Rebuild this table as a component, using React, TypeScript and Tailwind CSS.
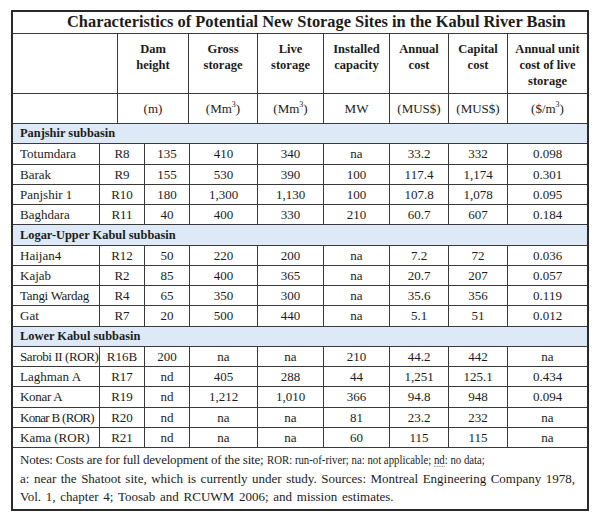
type Site = {
  name: string;
  code: string;
  dam: string;
  gross: string;
  live: string;
  mw: string;
  annual: string;
  capital: string;
  unit: string;
  tight?: string;
};

const sections: { label: string; rows: Site[] }[] = [
  {
    label: "Panjshir subbasin",
    rows: [
      { name: "Totumdara", code: "R8", dam: "135", gross: "410", live: "340", mw: "na", annual: "33.2", capital: "332", unit: "0.098" },
      { name: "Barak", code: "R9", dam: "155", gross: "530", live: "390", mw: "100", annual: "117.4", capital: "1,174", unit: "0.301" },
      { name: "Panjshir 1", code: "R10", dam: "180", gross: "1,300", live: "1,130", mw: "100", annual: "107.8", capital: "1,078", unit: "0.095" },
      { name: "Baghdara", code: "R11", dam: "40", gross: "400", live: "330", mw: "210", annual: "60.7", capital: "607", unit: "0.184" },
    ],
  },
  {
    label: "Logar-Upper Kabul subbasin",
    rows: [
      { name: "Haijan4", code: "R12", dam: "50", gross: "220", live: "200", mw: "na", annual: "7.2", capital: "72", unit: "0.036" },
      { name: "Kajab", code: "R2", dam: "85", gross: "400", live: "365", mw: "na", annual: "20.7", capital: "207", unit: "0.057" },
      { name: "Tangi Wardag", code: "R4", dam: "65", gross: "350", live: "300", mw: "na", annual: "35.6", capital: "356", unit: "0.119", tight: "tracking-[-0.3px]" },
      { name: "Gat", code: "R7", dam: "20", gross: "500", live: "440", mw: "na", annual: "5.1", capital: "51", unit: "0.012" },
    ],
  },
  {
    label: "Lower Kabul subbasin",
    rows: [
      { name: "Sarobi II (ROR)", code: "R16B", dam: "200", gross: "na", live: "na", mw: "210", annual: "44.2", capital: "442", unit: "na", tight: "tracking-[-0.4px]" },
      { name: "Laghman A", code: "R17", dam: "nd", gross: "405", live: "288", mw: "44", annual: "1,251", capital: "125.1", unit: "0.434" },
      { name: "Konar A", code: "R19", dam: "nd", gross: "1,212", live: "1,010", mw: "366", annual: "94.8", capital: "948", unit: "0.094", tight: "tracking-[-0.3px]" },
      { name: "Konar B (ROR)", code: "R20", dam: "nd", gross: "na", live: "na", mw: "81", annual: "23.2", capital: "232", unit: "na", tight: "tracking-[-0.7px]" },
      { name: "Kama (ROR)", code: "R21", dam: "nd", gross: "na", live: "na", mw: "60", annual: "115", capital: "115", unit: "na" },
    ],
  },
];

// header and data rows don't share column edges in the source table
const headGrid = "grid grid-cols-[104px_71px_69px_66px_66px_59px_59px_80px]";
const dataGrid = "grid grid-cols-[86px_45px_45px_68px_66px_66px_59px_59px_80px]";
const line = "border-[#3a3a3a]";

function HeadCell({ children }: { children?: React.ReactNode }) {
  return (
    <div className={`border-l ${line} first:border-l-0 pt-[7px] text-center font-bold text-[12.5px] leading-[16px]`}>
      {children}
    </div>
  );
}

function UnitCell({ children }: { children?: React.ReactNode }) {
  return (
    <div className={`border-l ${line} first:border-l-0 flex items-center justify-center text-[13px]`}>
      {children}
    </div>
  );
}

function DataRow({ site }: { site: Site }) {
  const values = [site.code, site.dam, site.gross, site.live, site.mw, site.annual, site.capital, site.unit];
  return (
    <div className={`${dataGrid} h-[20.25px] border-b ${line} text-[13px] leading-none`}>
      <div className={`flex items-center pl-[7px] whitespace-nowrap ${site.tight ?? ""}`}>{site.name}</div>
      {values.map((v, i) => (
        <div key={i} className={`border-l ${line} flex items-center justify-center`}>
          {v}
        </div>
      ))}
    </div>
  );
}

export default function App() {
  return (
    <div className="w-[600px] h-[522px] bg-white pt-[10px] pl-[11px] text-[#1c1c1c] font-[family-name:'Liberation_Serif','Times_New_Roman',serif]">
      <div className="w-[578px] border-2 border-[#2a2a2a]">
        <div className={`h-[22px] border-b ${line} flex items-center pl-[54px] font-bold text-[16.4px] leading-none whitespace-nowrap`}>
          Characteristics of Potential New Storage Sites in the Kabul River Basin
        </div>

        <div className={`${headGrid} h-[60px] border-b ${line}`}>
          <HeadCell />
          <HeadCell>Dam<br />height</HeadCell>
          <HeadCell>Gross<br />storage</HeadCell>
          <HeadCell>Live<br />storage</HeadCell>
          <HeadCell>Installed<br />capacity</HeadCell>
          <HeadCell>Annual<br />cost</HeadCell>
          <HeadCell>Capital<br />cost</HeadCell>
          <HeadCell>Annual unit<br />cost of live<br />storage</HeadCell>
        </div>

        <div className={`${headGrid} h-[30px] border-b ${line}`}>
          <UnitCell />
          <UnitCell>(m)</UnitCell>
          <UnitCell>(Mm<sup className="text-[8px] -top-[4px]">3</sup>)</UnitCell>
          <UnitCell>(Mm<sup className="text-[8px] -top-[4px]">3</sup>)</UnitCell>
          <UnitCell>MW</UnitCell>
          <UnitCell>(MUS$)</UnitCell>
          <UnitCell>(MUS$)</UnitCell>
          <UnitCell>($/m<sup className="text-[8px] -top-[4px]">3</sup>)</UnitCell>
        </div>

        {sections.map((s) => (
          <div key={s.label}>
            <div className={`h-[20.25px] border-b ${line} bg-[#dde9f6] flex items-center pl-[7px] font-bold text-[12.4px] leading-none`}>
              {s.label}
            </div>
            {s.rows.map((r) => (
              <DataRow key={r.name} site={r} />
            ))}
          </div>
        ))}

        <div className="h-[61px] pl-[7px] pr-[12px] pt-[3px] text-[13px] leading-[18.5px]">
          <div className="whitespace-nowrap">
            <span className="tracking-[-0.2px]">Notes: Costs are for full development of the site; </span>
            <span className="inline-block origin-left scale-x-[0.83]">
              ROR: run-of-river; na: not applicable;{" "}
              <span className="underline decoration-dotted decoration-[#888] underline-offset-2">nd</span>: no data;
            </span>
          </div>
          <div className="whitespace-nowrap text-justify [text-align-last:justify]">
            a: near the Shatoot site, which is currently under study. Sources: Montreal Engineering Company 1978,
          </div>
          <div className="whitespace-nowrap [word-spacing:1.5px]">
            Vol. 1, chapter 4; Toosab and RCUWM 2006; and mission estimates.
          </div>
        </div>
      </div>
    </div>
  );
}
